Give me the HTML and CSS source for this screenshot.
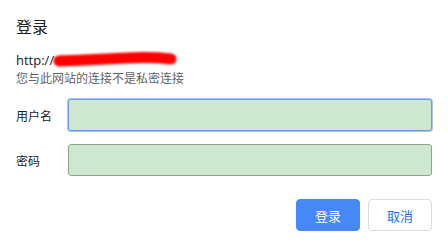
FILE: index.html
```html
<!DOCTYPE html>
<html lang="zh-CN">
<head>
<meta charset="utf-8">
<title>登录</title>
<link rel="stylesheet" href="styles.css">
</head>
<body>
<div class="dialog">
  <h1 class="title">登录</h1>
  <div class="origin">http://<span class="redact"><svg width="130" height="24" viewBox="0 0 130 24"><defs><filter id="b" filterUnits="userSpaceOnUse" x="0" y="0" width="130" height="24"><feGaussianBlur stdDeviation="1"/></filter></defs><path d="M7 14 C30 13 55 12 75 11 C95 10 110 11 119 12" stroke="#ff0000" stroke-width="11" stroke-linecap="round" fill="none" filter="url(#b)"/></svg></span></div>
  <div class="note">您与此网站的连接不是私密连接</div>
  <div class="form">
    <label class="row"><span class="label">用户名</span><span class="field focused"></span></label>
    <label class="row"><span class="label">密码</span><span class="field"></span></label>
  </div>
  <div class="actions">
    <button class="btn primary">登录</button>
    <button class="btn secondary">取消</button>
  </div>
</div>
</body>
</html>
```
FILE: styles.css
```css
html, body {
  margin: 0;
  padding: 0;
  background: #ffffff;
}
body {
  font-family: "Open Sans", "Noto Sans CJK SC", sans-serif;
  color: #202124;
}
.dialog {
  width: 448px;
  height: 246px;
  box-sizing: border-box;
  padding: 15px 16px 0 16px;
  display: flex;
  flex-direction: column;
}
.title {
  margin: 0;
  font-family: "Noto Sans CJK SC", sans-serif;
  font-weight: 400;
  font-size: 16px;
  line-height: 22px;
  color: #202124;
}
.origin {
  margin-top: 14px;
  font-size: 13px;
  line-height: 18px;
  height: 18px;
  color: #202124;
  display: flex;
  align-items: center;
  position: relative;
}
.redact {
  position: absolute;
  left: 36px;
  top: -4px;
  width: 130px;
  height: 24px;
}
.redact svg { display: block; }
.note {
  margin-top: 1px;
  font-family: "Noto Sans CJK SC", sans-serif;
  font-size: 12px;
  line-height: 16px;
  color: #5f6368;
}
.form {
  margin-top: 13px;
  display: flex;
  flex-direction: column;
  gap: 13px;
}
.row {
  display: flex;
  align-items: center;
}
.label {
  width: 52px;
  font-family: "Noto Sans CJK SC", sans-serif;
  font-size: 12px;
  color: #202124;
}
.field {
  flex: 1;
  height: 32px;
  box-sizing: border-box;
  background: #cde8cf;
  border: 1px solid #8ea68e;
  border-radius: 3px;
}
.field.focused {
  border-color: #6f9be6;
  box-shadow: 0 0 0 1px #a8c4f0;
}
.actions {
  margin-top: 23px;
  display: flex;
  justify-content: flex-end;
  gap: 8px;
}
.btn {
  width: 64px;
  height: 32px;
  box-sizing: border-box;
  border-radius: 4px;
  font-family: "Noto Sans CJK SC", sans-serif;
  font-size: 13px;
  padding: 0;
}
.primary {
  background: #4688f5;
  border: 1px solid #4688f5;
  color: #ffffff;
}
.secondary {
  background: #ffffff;
  border: 1px solid #dadce0;
  color: #1a73e8;
}
```
